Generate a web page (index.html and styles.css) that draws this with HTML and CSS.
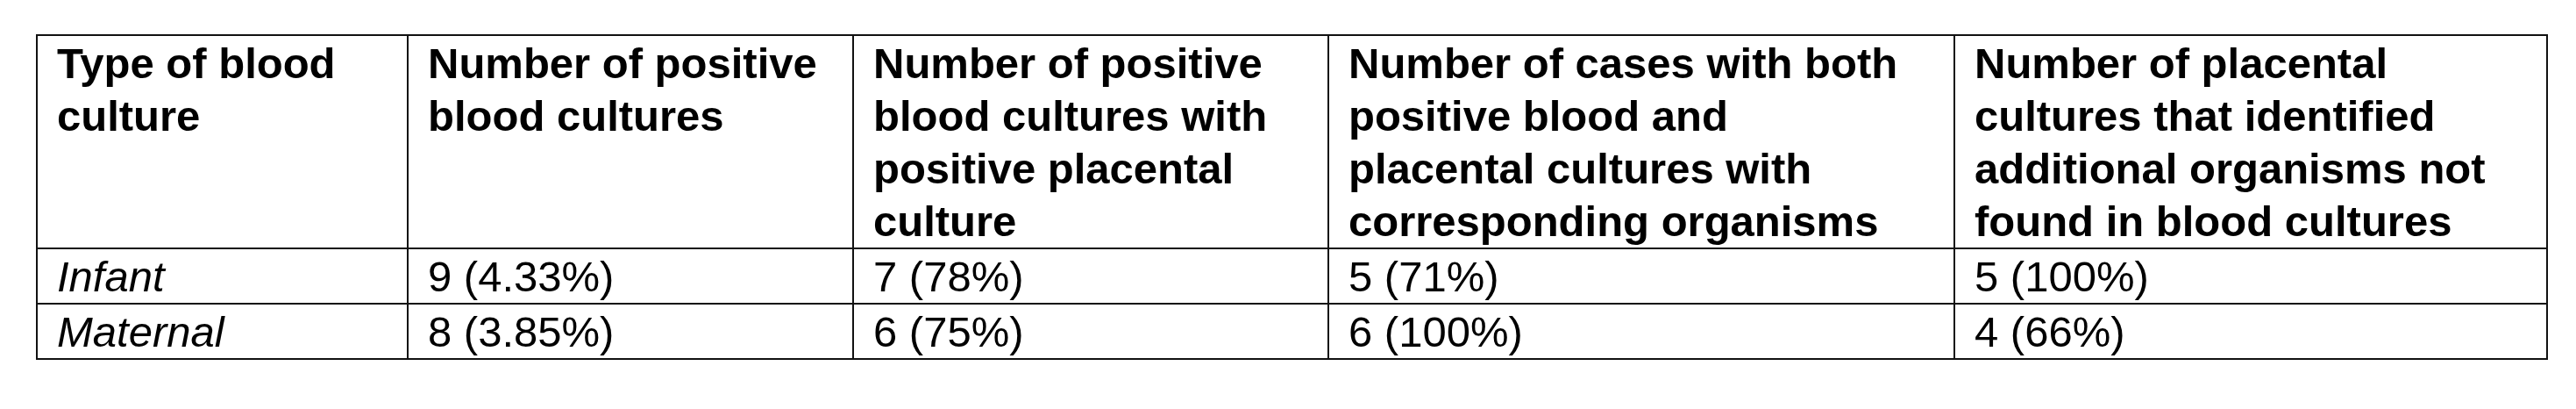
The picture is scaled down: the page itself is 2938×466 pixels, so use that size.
FILE: index.html
```html
<!DOCTYPE html>
<html lang="en">

<head>
  <meta charset="UTF-8">
  <meta name="viewport" content="width=device-width, initial-scale=1.0">
  <link rel="stylesheet" href="styles.css">
  <title>Blood and placental cultures</title>
</head>

<body>
  <div class="wrapper">
    <table class="cultures">
      <colgroup>
        <col class="c1">
        <col class="c2">
        <col class="c3">
        <col class="c4">
        <col class="c5">
      </colgroup>
      <thead>
        <tr>
          <th>Type of blood<br>culture</th>
          <th>Number of positive<br>blood cultures</th>
          <th>Number of positive<br>blood cultures with<br>positive placental<br>culture</th>
          <th>Number of cases with both<br>positive blood and<br>placental cultures with<br>corresponding organisms</th>
          <th>Number of placental<br>cultures that identified<br>additional organisms not<br>found in blood cultures</th>
        </tr>
      </thead>
      <tbody>
        <tr>
          <td class="type">Infant</td>
          <td>9 (4.33%)</td>
          <td>7 (78%)</td>
          <td>5 (71%)</td>
          <td>5 (100%)</td>
        </tr>
        <tr>
          <td class="type">Maternal</td>
          <td>8 (3.85%)</td>
          <td>6 (75%)</td>
          <td>6 (100%)</td>
          <td>4 (66%)</td>
        </tr>
      </tbody>
    </table>
  </div>
</body>

</html>
```

FILE: styles.css
```css
* {
  margin: 0;
  padding: 0;
}

body {
  background-color: #fff;
  color: #000;
  font-family: "Liberation Sans", Arial, sans-serif;
}

.wrapper {
  padding: 39px 0 0 41px;
}

.cultures {
  width: 2863px;
  table-layout: fixed;
  border-collapse: collapse;
  font-size: 49px;
  line-height: 60px;
}

.cultures .c1 {
  width: 423px;
}

.cultures .c2 {
  width: 508px;
}

.cultures .c3 {
  width: 542px;
}

.cultures .c4 {
  width: 714px;
}

.cultures .c5 {
  width: 676px;
}

.cultures th,
.cultures td {
  border: 2px solid #111;
  padding: 1px 10px 0 22px;
  text-align: left;
  vertical-align: top;
  white-space: nowrap;
}

.cultures th {
  font-weight: bold;
}

.cultures td {
  font-weight: normal;
}

.cultures .type {
  font-style: italic;
}
```
